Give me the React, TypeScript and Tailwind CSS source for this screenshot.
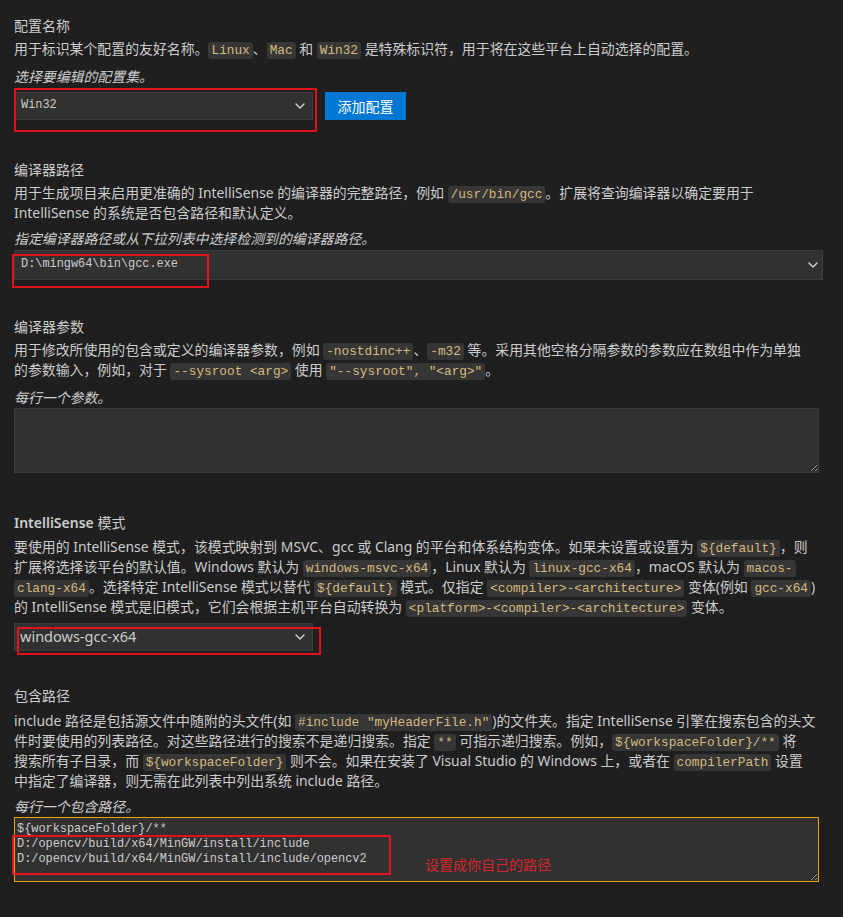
import React from 'react';
import { ChevronDown } from 'lucide-react';

const sans = { fontFamily: '"Noto Sans", "Noto Sans CJK SC", sans-serif' };

const Code: React.FC<{ children: React.ReactNode }> = ({ children }) => (
  <code className="rounded-[3px] bg-[#363636] px-[3px] py-[1px] font-['Liberation_Mono',monospace] text-[12.75px] text-[#d7ba7d]">
    {children}
  </code>
);

type SectionProps = {
  title: React.ReactNode;
  lines: React.ReactNode[];
  hint?: string;
  mt: string;
  descMt: string;
  hintMt?: string;
  controlMt: string;
  children: React.ReactNode;
};

const Section: React.FC<SectionProps> = ({ title, lines, hint, mt, descMt, hintMt, controlMt, children }) => (
  <section className={mt}>
    <div className="h-[20px] text-[14px] leading-[20px]">{title}</div>
    <div className={descMt}>
      {lines.map((line, i) => (
        <div key={i} className="h-[20px] whitespace-nowrap leading-[20px]">
          {line}
        </div>
      ))}
    </div>
    {hint && <div className={`h-[20px] italic leading-[20px] ${hintMt}`}>{hint}</div>}
    <div className={controlMt}>{children}</div>
  </section>
);

const App: React.FC = () => {
  return (
    <div
      className="min-h-screen bg-[#1f1f1f] pl-[14px] pr-[20px] pt-[16px] text-[13.9px] text-[#cccccc] [color-scheme:dark]"
      style={sans}
    >
      {/* 配置名称 */}
      <Section
        title="配置名称"
        mt="mt-0"
        descMt="mt-[3px]"
        hintMt="mt-[8px]"
        controlMt="mt-[5px]"
        hint="选择要编辑的配置集。"
        lines={[
          <>
            用于标识某个配置的友好名称。<Code>Linux</Code>、<Code>Mac</Code> 和 <Code>Win32</Code> 是特殊标识符，用于将在这些平台上自动选择的配置。
          </>,
        ]}
      >
        <div className="relative flex items-center gap-[12px]">
          <div className="flex h-[28px] w-[299px] items-center justify-between border border-[#3c3c3c] bg-[#313131] pl-[6px] pr-[4px] font-['Liberation_Mono',monospace] text-[11.9px]">
            <span>Win32</span>
            <ChevronDown size={16} strokeWidth={2.2} className="text-[#cccccc]" />
          </div>
          <button className="flex h-[28px] w-[81px] items-center justify-center bg-[#0078d4] text-[14px] text-white">
            添加配置
          </button>
          <div className="pointer-events-none absolute left-0 top-[-4px] h-[44px] w-[303px] border-2 border-[#e3111b]" />
        </div>
      </Section>

      {/* 编译器路径 */}
      <Section
        title="编译器路径"
        mt="mt-[40px]"
        descMt="mt-[3px]"
        hintMt="mt-[6px]"
        controlMt="mt-[1px]"
        hint="指定编译器路径或从下拉列表中选择检测到的编译器路径。"
        lines={[
          <>
            用于生成项目来启用更准确的 IntelliSense 的编译器的完整路径，例如 <Code>/usr/bin/gcc</Code>。扩展将查询编译器以确定要用于
          </>,
          <>IntelliSense 的系统是否包含路径和默认定义。</>,
        ]}
      >
        <div className="relative">
          <div className="flex h-[30px] w-[809px] items-center justify-between border border-[#3c3c3c] bg-[#313131] pl-[6px] pr-[1px] font-['Liberation_Mono',monospace] text-[11.9px]">
            <span>D:\mingw64\bin\gcc.exe</span>
            <ChevronDown size={16} strokeWidth={2.2} className="text-[#cccccc]" />
          </div>
          <div className="pointer-events-none absolute left-[-2px] top-[4px] h-[34px] w-[197px] border-2 border-[#e3111b]" />
        </div>
      </Section>

      {/* 编译器参数 */}
      <Section
        title="编译器参数"
        mt="mt-[37px]"
        descMt="mt-[3px]"
        hintMt="mt-[8px]"
        controlMt="mt-0"
        hint="每行一个参数。"
        lines={[
          <>
            用于修改所使用的包含或定义的编译器参数，例如 <Code>-nostdinc++</Code>、<Code>-m32</Code> 等。采用其他空格分隔参数的参数应在数组中作为单独
          </>,
          <>
            的参数输入，例如，对于 <Code>--sysroot &lt;arg&gt;</Code> 使用 <Code>"--sysroot", "&lt;arg&gt;"</Code>。
          </>,
        ]}
      >
        <textarea
          readOnly
          className="block h-[65px] w-[805px] border border-[#3c3c3c] bg-[#313131] px-[2px] py-[3px] font-['Liberation_Mono',monospace] text-[11.9px] leading-[15px] text-[#cccccc] outline-none"
        />
      </Section>

      {/* IntelliSense 模式 */}
      <Section
        title={
          <>
            <span className="font-semibold">IntelliSense</span> 模式
          </>
        }
        mt="mt-[40px]"
        descMt="mt-[4px]"
        controlMt="mt-[6px]"
        lines={[
          <>
            要使用的 IntelliSense 模式，该模式映射到 MSVC、gcc 或 Clang 的平台和体系结构变体。如果未设置或设置为 <Code>{'${default}'}</Code>，则
          </>,
          <>
            扩展将选择该平台的默认值。Windows 默认为 <Code>windows-msvc-x64</Code>，Linux 默认为 <Code>linux-gcc-x64</Code>，macOS 默认为 <Code>macos-</Code>
          </>,
          <>
            <Code>clang-x64</Code>。选择特定 IntelliSense 模式以替代 <Code>{'${default}'}</Code> 模式。仅指定 <Code>&lt;compiler&gt;-&lt;architecture&gt;</Code> 变体(例如 <Code>gcc-x64</Code>)
          </>,
          <>
            的 IntelliSense 模式是旧模式，它们会根据主机平台自动转换为 <Code>&lt;platform&gt;-&lt;compiler&gt;-&lt;architecture&gt;</Code> 变体。
          </>,
        ]}
      >
        <div className="relative">
          <div className="flex h-[28px] w-[299px] items-center justify-between border border-[#3c3c3c] bg-[#313131] pl-[5px] pr-[4px] text-[14.5px]">
            <span>windows-gcc-x64</span>
            <ChevronDown size={16} strokeWidth={2.2} className="text-[#cccccc]" />
          </div>
          <div className="pointer-events-none absolute left-[3px] top-[4px] h-[28px] w-[304px] border-2 border-[#e3111b]" />
        </div>
      </Section>

      {/* 包含路径 */}
      <Section
        title="包含路径"
        mt="mt-[35px]"
        descMt="mt-[5px]"
        hintMt="mt-[6px]"
        controlMt="mt-0"
        hint="每行一个包含路径。"
        lines={[
          <>
            include 路径是包括源文件中随附的头文件(如 <Code>#include "myHeaderFile.h"</Code>)的文件夹。指定 IntelliSense 引擎在搜索包含的头文
          </>,
          <>
            件时要使用的列表路径。对这些路径进行的搜索不是递归搜索。指定 <Code>**</Code> 可指示递归搜索。例如，<Code>{'${workspaceFolder}/**'}</Code> 将
          </>,
          <>
            搜索所有子目录，而 <Code>{'${workspaceFolder}'}</Code> 则不会。如果在安装了 Visual Studio 的 Windows 上，或者在 <Code>compilerPath</Code> 设置
          </>,
          <>中指定了编译器，则无需在此列表中列出系统 include 路径。</>,
        ]}
      >
        <div className="relative">
          <textarea
            readOnly
            value={'${workspaceFolder}/**\nD:/opencv/build/x64/MinGW/install/include\nD:/opencv/build/x64/MinGW/install/include/opencv2'}
            className="block h-[65px] w-[805px] border border-[#e8a20c] bg-[#313131] px-[2px] pb-[2px] pt-[4px] font-['Liberation_Mono',monospace] text-[11.9px] leading-[15px] text-[#cccccc] outline-none"
          />
          <div className="pointer-events-none absolute left-[-2px] top-[18px] h-[40px] w-[379px] border-2 border-[#e3111b]" />
          <span className="pointer-events-none absolute left-[411px] top-[38px] text-[14px] leading-[20px] text-[#d9232b]">
            设置成你自己的路径
          </span>
        </div>
      </Section>
    </div>
  );
};

export default App;
